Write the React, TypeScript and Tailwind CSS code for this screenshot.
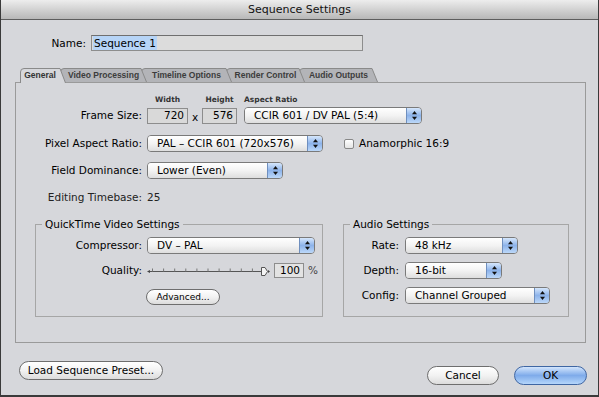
import React from 'react';

// small up/down arrows in the blue end of a popup button
function Arrows() {
  return (
    <svg width="5" height="9" viewBox="0 0 5 9">
      <path d="M2.5 0 L5 3.3 L0 3.3 Z" fill="#111" />
      <path d="M0 5.7 L5 5.7 L2.5 9 Z" fill="#111" />
    </svg>
  );
}

function Popup({ className, children }: { className: string; children: React.ReactNode }) {
  return (
    <div className={`${className} h-[17px] flex rounded-[4px] border border-[#7a7a7a] overflow-hidden shrink-0`}>
      <div className="flex-1 flex items-center pl-[9px] bg-linear-to-b from-white via-[#f3f3f3] to-[#dedede] whitespace-nowrap">
        {children}
      </div>
      <div className="w-[15px] flex items-center justify-center border-l border-[#6f8fbe] bg-linear-to-b from-[#d6e7fc] via-[#8db3ea] to-[#bcd8f9]">
        <Arrows />
      </div>
    </div>
  );
}

function Pill({ className, children, primary }: { className: string; children: React.ReactNode; primary?: boolean }) {
  return (
    <div
      className={`${className} flex items-center justify-center rounded-full border whitespace-nowrap ${
        primary
          ? 'border-[#3f66a3] bg-linear-to-b from-[#d3e5fc] via-[#7fabea] to-[#b5d6fb]'
          : 'border-[#6e6e6e] bg-linear-to-b from-white via-[#f2f2f2] to-[#dcdcdc]'
      }`}
    >
      {children}
    </div>
  );
}

function TabShape({ w, active }: { w: number; active?: boolean }) {
  return (
    <svg className="absolute left-0 top-0 overflow-visible" width={w} height={15} viewBox={`0 0 ${w} 15`}>
      <path
        d={`M0.5 ${active ? 15 : 14} V4 Q0.5 0.5 4 0.5 H${w - 6} L${w - 0.5} ${active ? 15 : 14}`}
        fill={active ? '#d6d7db' : '#b3b4b8'}
        stroke="#8a8a8a"
      />
    </svg>
  );
}

function Tab({ w, label, active, className }: { w: number; label: string; active?: boolean; className: string }) {
  return (
    <div className={`relative h-[14px] shrink-0 ${className}`}>
      <TabShape w={w} active={active} />
      <div className={`relative h-full flex items-center justify-center pr-[6px] ${active ? '' : 'pl-[6px]'} font-bold text-[8.5px] ${active ? 'text-[#333]' : 'text-[#3c3c3c]'} font-['Liberation_Sans',sans-serif] whitespace-nowrap`}>
        {label}
      </div>
    </div>
  );
}

function Slider() {
  const ticks = Array.from({ length: 11 }, (_, i) => 5 + i * 11.1);
  return (
    <svg width="123" height="17" viewBox="0 0 123 17" className="shrink-0">
      <path d="M0 9.5 L3 8 L3 11 Z" fill="#444" />
      <line x1="3" y1="9.5" x2="116" y2="9.5" stroke="#555" />
      {ticks.map((x) => (
        <line key={x} x1={x + 0.5} y1="6.5" x2={x + 0.5} y2="9.5" stroke="#777" />
      ))}
      <path d="M114.5 5.5 H118 L120.5 9.5 L118 13.5 H114.5 Z" fill="#f4f4f4" stroke="#555" />
      <path d="M121 8 L123 9.5 L121 11 Z" fill="#444" />
    </svg>
  );
}

export default function App() {
  return (
    <div className="w-[599px] h-[397px] flex flex-col bg-[#d6d7db] border-x border-b-2 border-[#3a3a3a] overflow-hidden font-['DejaVu_Sans',sans-serif] text-[10.5px] leading-none text-black">
      {/* title bar */}
      <div className="h-[20px] shrink-0 flex items-center justify-center border-b border-[#5e5e5e] bg-linear-to-b from-[#ededed] to-[#b8b8b8] text-[11px] text-[#111]">
        Sequence Settings
      </div>

      {/* name */}
      <div className="mt-[15px] h-[16px] flex items-center">
        <div className="w-[85px] text-right">Name:</div>
        <div className="ml-[5px] w-[272px] h-[16px] flex items-center border border-[#8d8d8d] border-t-[#6f6f6f] bg-[#dcdcdc] pl-[1px]">
          <span className="bg-[#b6d4f7] px-[1px] py-[2px]">Sequence 1</span>
        </div>
      </div>

      {/* tabs */}
      <div className="relative z-10 mt-[17px] ml-[19px] h-[14px] flex">
        <Tab w={46} label="General" active className="w-[46px] z-50" />
        <Tab w={87} label="Video Processing" className="w-[87px] -ml-[6px] z-40" />
        <Tab w={91} label="Timeline Options" className="w-[91px] -ml-[6px] z-30" />
        <Tab w={79} label="Render Control" className="w-[79px] -ml-[6px] z-20" />
        <Tab w={79} label="Audio Outputs" className="w-[79px] -ml-[6px] z-10" />
      </div>

      {/* tab panel */}
      <div className="ml-[14px] w-[571px] h-[261px] shrink-0 border border-[#9a9a9a] flex flex-col">
        <div className="mt-[11px] h-[11px] flex items-center text-[7.5px] font-bold text-[#333]">
          <div className="w-[131px]" />
          <div className="w-[41px] text-center">Width</div>
          <div className="w-[14px]" />
          <div className="w-[35px] text-center">Height</div>
          <div className="ml-[7px]">Aspect Ratio</div>
        </div>

        <div className="mt-[2px] h-[17px] flex items-center">
          <div className="w-[126px] text-right">Frame Size:</div>
          <div className="ml-[5px] w-[41px] h-[16px] flex items-center justify-end pr-[3px] border border-[#8d8d8d] bg-[#d9d9d9]">720</div>
          <div className="w-[14px] text-center pt-[3px]">x</div>
          <div className="w-[35px] h-[16px] flex items-center justify-end pr-[3px] border border-[#8d8d8d] bg-[#d9d9d9]">576</div>
          <Popup className="ml-[7px] w-[178px]">CCIR 601 / DV PAL (5:4)</Popup>
        </div>

        <div className="mt-[11px] h-[17px] flex items-center">
          <div className="w-[126px] text-right">Pixel Aspect Ratio:</div>
          <Popup className="ml-[5px] w-[176px]">PAL – CCIR 601 (720x576)</Popup>
          <div className="ml-[21px] w-[10px] h-[10px] rounded-[2px] border border-[#888] bg-linear-to-b from-white to-[#e4e4e4]" />
          <div className="ml-[5px]">Anamorphic 16:9</div>
        </div>

        <div className="mt-[10px] h-[17px] flex items-center">
          <div className="w-[126px] text-right">Field Dominance:</div>
          <Popup className="ml-[5px] w-[136px]">Lower (Even)</Popup>
        </div>

        <div className="mt-[10px] h-[17px] flex items-center text-[#222]">
          <div className="w-[126px] text-right">Editing Timebase:</div>
          <div className="ml-[5px]">25</div>
        </div>

        {/* group boxes */}
        <div className="mt-[12px] flex">
          <fieldset className="ml-[19px] w-[288px] h-[99px] border border-[#a6a6a6] flex flex-col">
            <legend className="ml-[6px] px-[3px] leading-[13px]">QuickTime Video Settings</legend>
            <div className="mt-[6px] h-[17px] flex items-center">
              <div className="w-[106px] text-right">Compressor:</div>
              <Popup className="ml-[5px] w-[168px]">DV – PAL</Popup>
            </div>
            <div className="mt-[8px] h-[17px] flex items-center">
              <div className="w-[106px] text-right">Quality:</div>
              <div className="ml-[5px] flex items-center">
                <Slider />
                <div className="ml-[4px] w-[30px] h-[15px] flex items-center justify-end pr-[3px] border border-[#8d8d8d] bg-[#e3e3e3]">100</div>
                <div className="ml-[4px] text-[#444]">%</div>
              </div>
            </div>
            <div className="mt-[10px] flex">
              <Pill className="ml-[110px] w-[74px] h-[16px] text-[9px]">Advanced...</Pill>
            </div>
          </fieldset>

          <fieldset className="ml-[20px] w-[226px] h-[99px] border border-[#a6a6a6] flex flex-col">
            <legend className="ml-[6px] px-[3px] leading-[13px]">Audio Settings</legend>
            <div className="mt-[6px] h-[17px] flex items-center">
              <div className="w-[55px] text-right">Rate:</div>
              <Popup className="ml-[6px] w-[113px]">48 kHz</Popup>
            </div>
            <div className="mt-[8px] h-[17px] flex items-center">
              <div className="w-[55px] text-right">Depth:</div>
              <Popup className="ml-[6px] w-[97px]">16-bit</Popup>
            </div>
            <div className="mt-[8px] h-[17px] flex items-center">
              <div className="w-[55px] text-right">Config:</div>
              <Popup className="ml-[6px] w-[145px]">Channel Grouped</Popup>
            </div>
          </fieldset>
        </div>
      </div>

      {/* bottom buttons */}
      <div className="mt-[18px] flex items-start">
        <Pill className="ml-[18px] w-[144px] h-[19px]">Load Sequence Preset...</Pill>
        <Pill className="ml-auto mt-[5px] w-[72px] h-[19px]">Cancel</Pill>
        <Pill primary className="ml-[15px] mr-[11px] mt-[5px] w-[73px] h-[19px]">OK</Pill>
      </div>
    </div>
  );
}
